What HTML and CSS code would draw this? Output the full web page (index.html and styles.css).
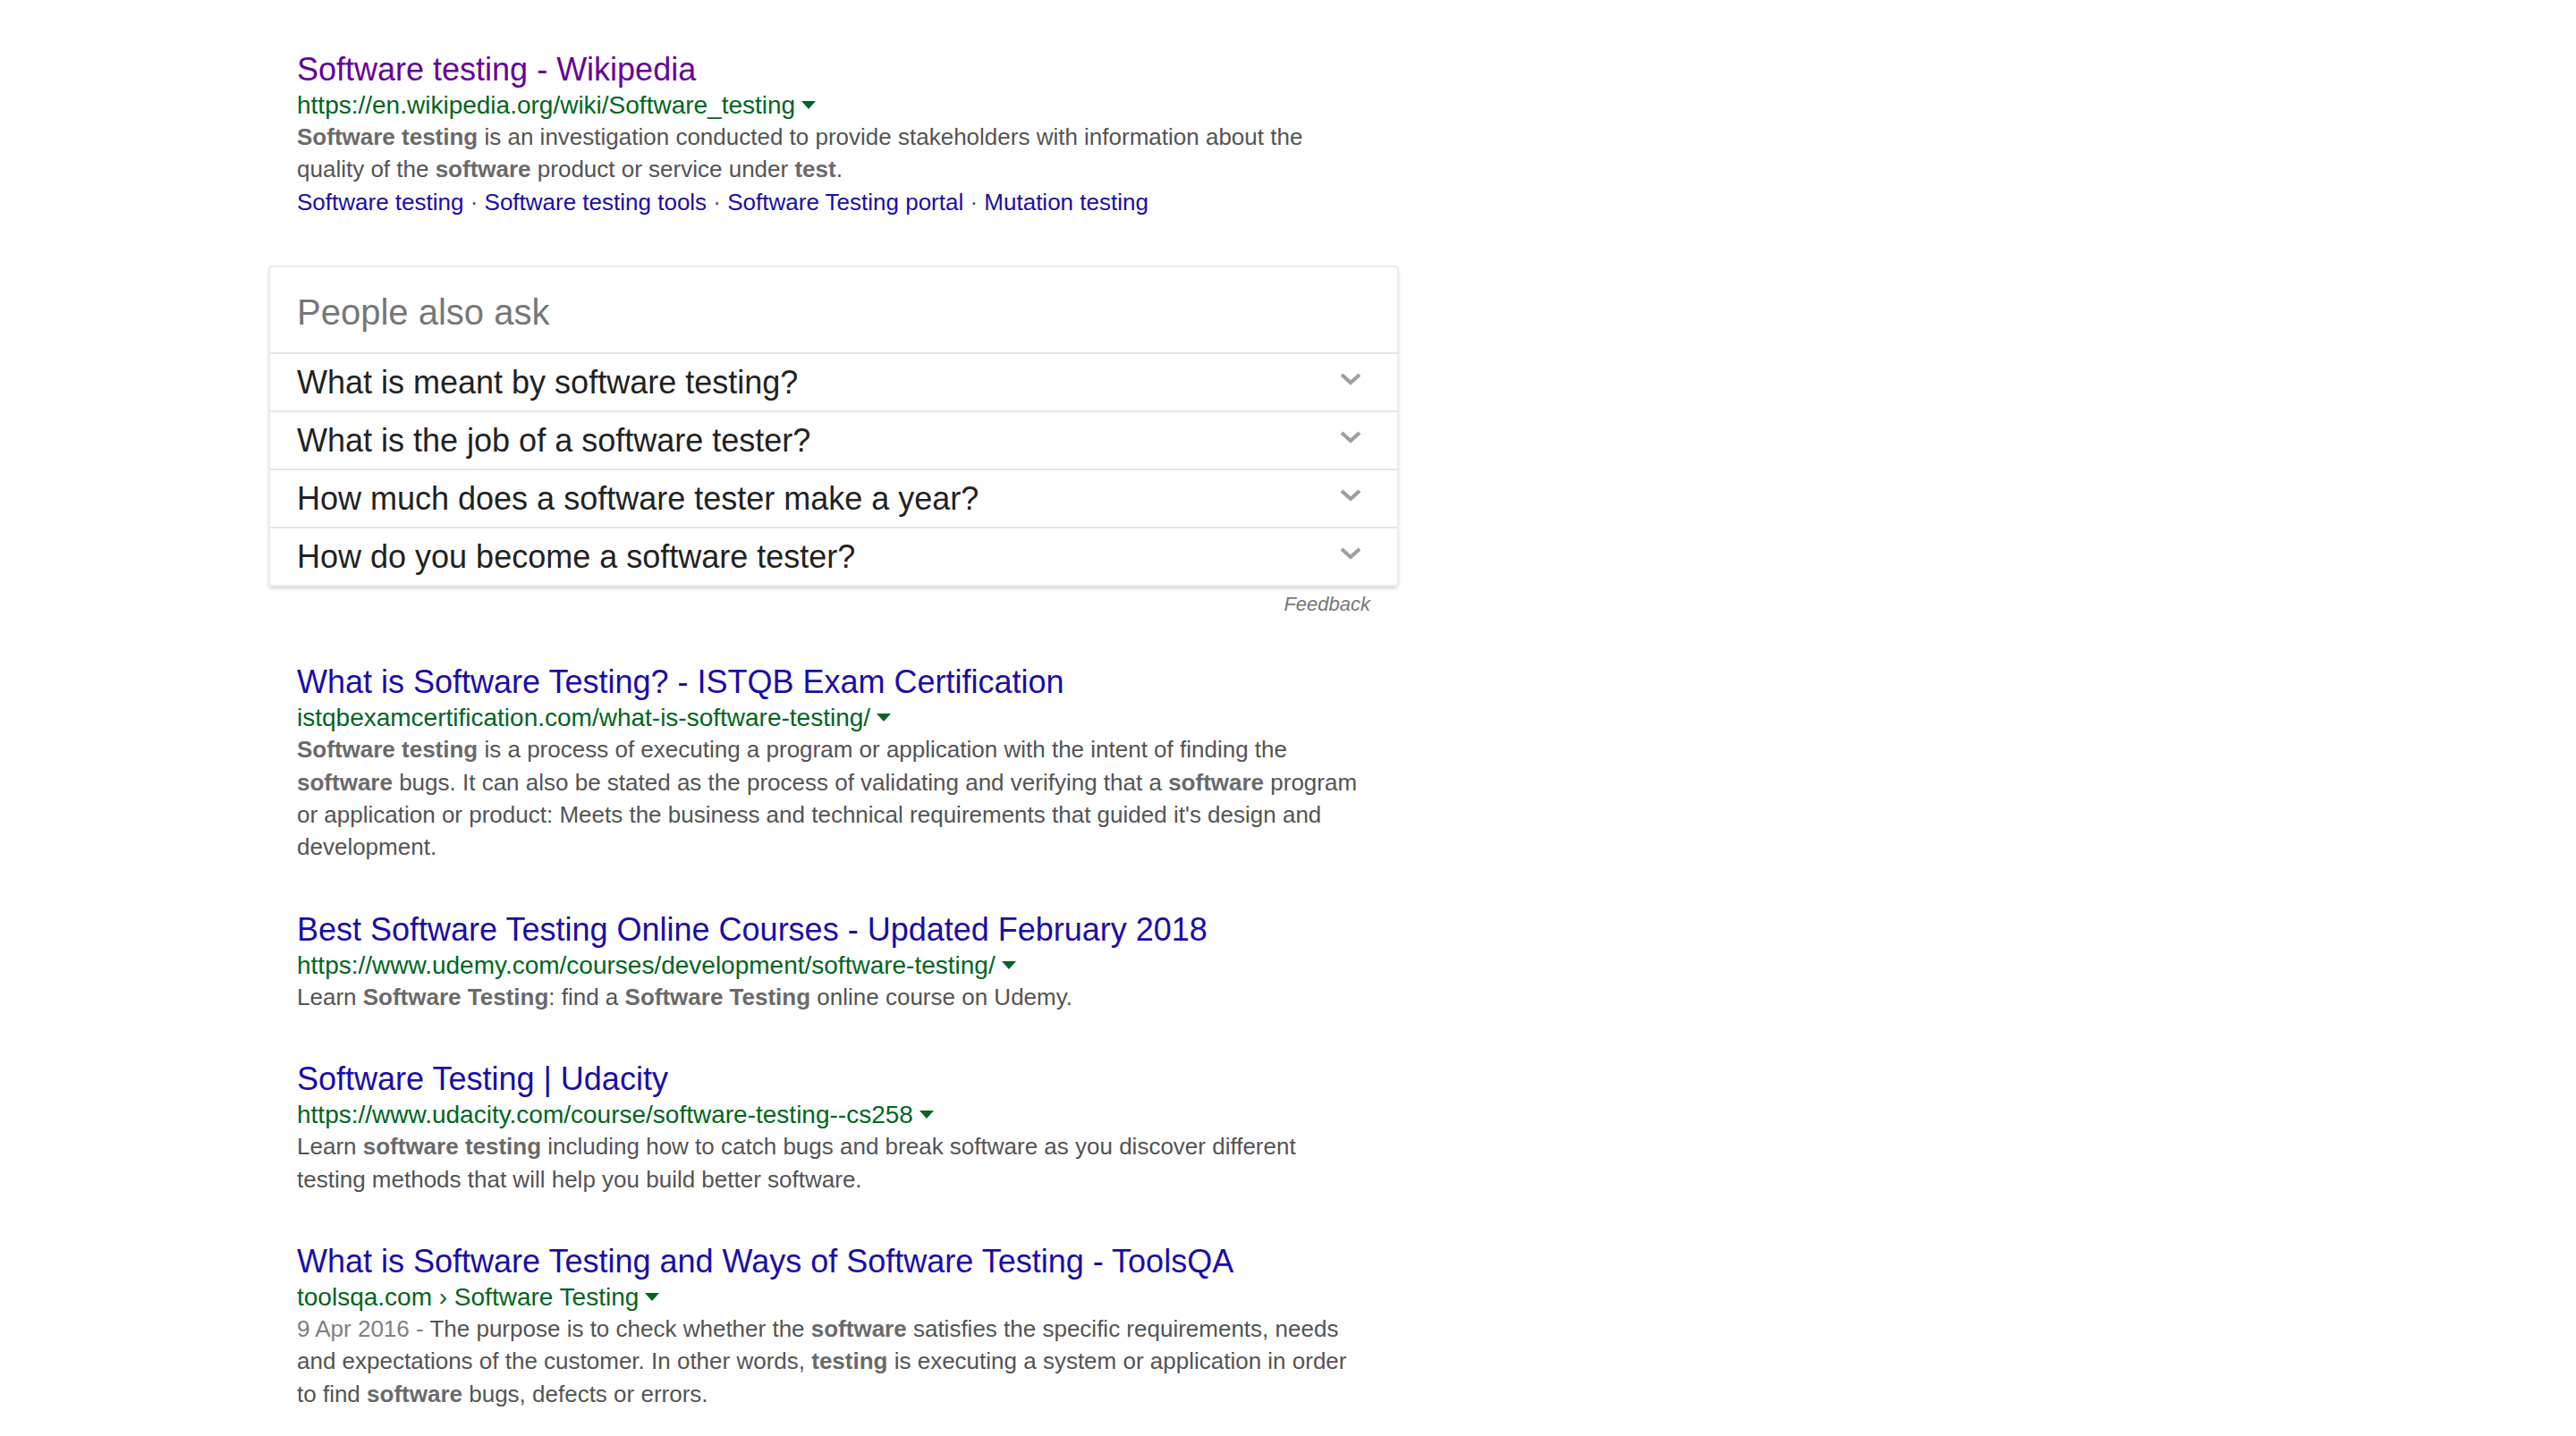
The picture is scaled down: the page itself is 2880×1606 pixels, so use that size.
FILE: index.html
```html
<!DOCTYPE html>
<html>
<head>
<meta charset="utf-8">
<title>software testing - Search</title>
<link rel="stylesheet" href="styles.css">
</head>
<body>
<div class="results">

  <div class="g">
    <h3 class="r"><a class="visited" href="#">Software testing - Wikipedia</a></h3>
    <div class="url"><cite>https://en.wikipedia.org/wiki/Software_testing</cite><span class="arrow"></span></div>
    <div class="st"><b>Software testing</b> is an investigation conducted to provide stakeholders with information about the quality of the <b>software</b> product or service under <b>test</b>.</div>
    <div class="sitelinks"><a href="#">Software testing</a><span class="sep"> · </span><a href="#">Software testing tools</a><span class="sep"> · </span><a href="#">Software Testing portal</a><span class="sep"> · </span><a href="#">Mutation testing</a></div>
  </div>

  <div class="paa">
    <div class="paa-head">People also ask</div>
    <div class="paa-q"><span>What is meant by software testing?</span><svg class="chev" viewBox="0 0 24 14" width="24" height="14"><polyline points="2,2 12,11 22,2"/></svg></div>
    <div class="paa-q"><span>What is the job of a software tester?</span><svg class="chev" viewBox="0 0 24 14" width="24" height="14"><polyline points="2,2 12,11 22,2"/></svg></div>
    <div class="paa-q"><span>How much does a software tester make a year?</span><svg class="chev" viewBox="0 0 24 14" width="24" height="14"><polyline points="2,2 12,11 22,2"/></svg></div>
    <div class="paa-q"><span>How do you become a software tester?</span><svg class="chev" viewBox="0 0 24 14" width="24" height="14"><polyline points="2,2 12,11 22,2"/></svg></div>
  </div>
  <div class="feedback">Feedback</div>

  <div class="g">
    <h3 class="r"><a href="#">What is Software Testing? - ISTQB Exam Certification</a></h3>
    <div class="url"><cite>istqbexamcertification.com/what-is-software-testing/</cite><span class="arrow"></span></div>
    <div class="st"><b>Software testing</b> is a process of executing a program or application with the intent of finding the <b>software</b> bugs. It can also be stated as the process of validating and verifying that a <b>software</b> program or application or product: Meets the business and technical requirements that guided it's design and development.</div>
  </div>

  <div class="g">
    <h3 class="r"><a href="#">Best Software Testing Online Courses - Updated February 2018</a></h3>
    <div class="url"><cite>https://www.udemy.com/courses/development/software-testing/</cite><span class="arrow"></span></div>
    <div class="st">Learn <b>Software Testing</b>: find a <b>Software Testing</b> online course on Udemy.</div>
  </div>

  <div class="g">
    <h3 class="r"><a href="#">Software Testing | Udacity</a></h3>
    <div class="url"><cite>https://www.udacity.com/course/software-testing--cs258</cite><span class="arrow"></span></div>
    <div class="st">Learn <b>software testing</b> including how to catch bugs and break software as you discover different testing methods that will help you build better software.</div>
  </div>

  <div class="g">
    <h3 class="r"><a href="#">What is Software Testing and Ways of Software Testing - ToolsQA</a></h3>
    <div class="url"><cite>toolsqa.com › Software Testing</cite><span class="arrow"></span></div>
    <div class="st"><span class="date">9 Apr 2016 - </span>The purpose is to check whether the <b>software</b> satisfies the specific requirements, needs and expectations of the customer. In other words, <b>testing</b> is executing a system or application in order to find <b>software</b> bugs, defects or errors.</div>
  </div>

</div>
</body>
</html>
```

FILE: styles.css
```css
html, body {
  margin: 0;
  padding: 0;
  background: #ffffff;
}

body {
  font-family: "Liberation Sans", Arial, sans-serif;
  color: #545454;
}

.results {
  width: 1200px;
  padding: 55px 0 0 332px;
}

.g {
  margin-bottom: 51px;
}

.r {
  margin: 0;
  font-size: 36px;
  font-weight: normal;
  line-height: 46px;
  white-space: nowrap;
}

.r a {
  color: #1a0dab;
  text-decoration: none;
}

.r a.visited {
  color: #660099;
}

.url {
  font-size: 28px;
  line-height: 34px;
  color: #006621;
  white-space: nowrap;
}

.url cite {
  font-style: normal;
}

.arrow {
  display: inline-block;
  vertical-align: 5px;
  margin-left: 7px;
  width: 0;
  height: 0;
  border-top: 9px solid #006621;
  border-left: 8px solid transparent;
  border-right: 8px solid transparent;
}

.st {
  font-size: 26px;
  line-height: 36.4px;
  color: #545454;
}

.st b {
  color: #6a6a6a;
  font-weight: bold;
}

.st .date {
  color: #808080;
}

.sitelinks {
  font-size: 26px;
  line-height: 36.4px;
  color: #545454;
}

.sitelinks a {
  color: #1a0dab;
  text-decoration: none;
}

.paa {
  margin: 53px -32px 0;
  border: 2px solid #ebebeb;
  border-radius: 4px;
  box-shadow: 0 3px 4px -1px rgba(0, 0, 0, 0.18);
  background: #ffffff;
}

.paa-head {
  height: 97px;
  padding: 0 30px;
  box-sizing: border-box;
  padding-top: 6px;
  line-height: 89px;
  font-size: 40px;
  color: #777777;
  border-bottom: 2px solid #e6e6e6;
}

.paa-q {
  display: flex;
  align-items: center;
  justify-content: space-between;
  height: 63px;
  padding: 0 40px 0 30px;
  font-size: 36px;
  color: #222222;
  border-bottom: 2px solid #e6e6e6;
}

.paa-q:last-child {
  border-bottom: none;
}

.chev {
  display: block;
  margin-top: -7px;
}

.chev polyline {
  fill: none;
  stroke: #9e9e9e;
  stroke-width: 4;
}

.feedback {
  text-align: right;
  font-size: 22px;
  font-style: italic;
  line-height: 36px;
  color: #777777;
  padding-top: 2px;
  margin-bottom: 46px;
}
```
